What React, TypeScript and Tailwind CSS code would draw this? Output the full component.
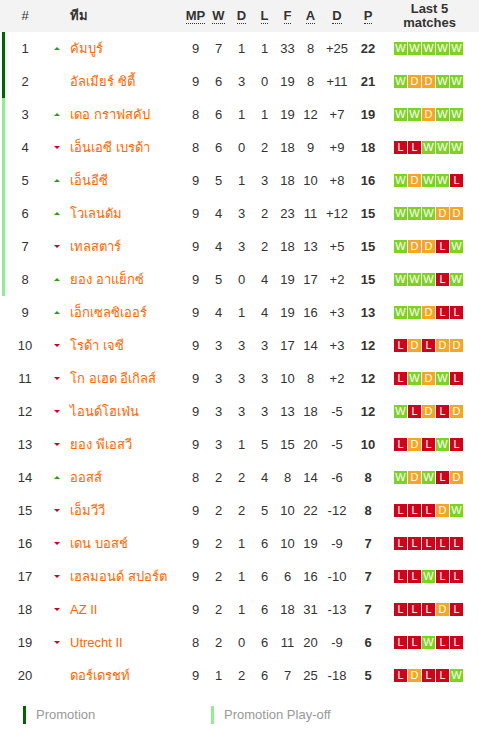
type Res = "W" | "D" | "L";

type Row = {
  pos: number;
  move: "up" | "down" | "";
  team: string;
  mp: number;
  w: number;
  d: number;
  l: number;
  f: number;
  a: number;
  diff: string;
  pts: number;
  form: string;
  zone: "promo" | "playoff" | "";
};

const rows: Row[] = [
  { pos: 1, move: "up", team: "คัมบูร์", mp: 9, w: 7, d: 1, l: 1, f: 33, a: 8, diff: "+25", pts: 22, form: "WWWWW", zone: "promo" },
  { pos: 2, move: "", team: "อัลเมียร์ ซิตี้", mp: 9, w: 6, d: 3, l: 0, f: 19, a: 8, diff: "+11", pts: 21, form: "WDDWW", zone: "promo" },
  { pos: 3, move: "up", team: "เดอ กราฟสคัป", mp: 8, w: 6, d: 1, l: 1, f: 19, a: 12, diff: "+7", pts: 19, form: "WWDWW", zone: "playoff" },
  { pos: 4, move: "down", team: "เอ็นเอซี เบรด้า", mp: 8, w: 6, d: 0, l: 2, f: 18, a: 9, diff: "+9", pts: 18, form: "LLWWW", zone: "playoff" },
  { pos: 5, move: "up", team: "เอ็นอีซี", mp: 9, w: 5, d: 1, l: 3, f: 18, a: 10, diff: "+8", pts: 16, form: "WDWWL", zone: "playoff" },
  { pos: 6, move: "up", team: "โวเลนดัม", mp: 9, w: 4, d: 3, l: 2, f: 23, a: 11, diff: "+12", pts: 15, form: "WWWDD", zone: "playoff" },
  { pos: 7, move: "down", team: "เทลสตาร์", mp: 9, w: 4, d: 3, l: 2, f: 18, a: 13, diff: "+5", pts: 15, form: "WDDLW", zone: "playoff" },
  { pos: 8, move: "up", team: "ยอง อาแย็กซ์", mp: 9, w: 5, d: 0, l: 4, f: 19, a: 17, diff: "+2", pts: 15, form: "WWWLW", zone: "playoff" },
  { pos: 9, move: "up", team: "เอ็กเซลซิเออร์", mp: 9, w: 4, d: 1, l: 4, f: 19, a: 16, diff: "+3", pts: 13, form: "WWDLL", zone: "" },
  { pos: 10, move: "down", team: "โรด้า เจซี", mp: 9, w: 3, d: 3, l: 3, f: 17, a: 14, diff: "+3", pts: 12, form: "LDLDD", zone: "" },
  { pos: 11, move: "down", team: "โก อเฮด อีเกิลส์", mp: 9, w: 3, d: 3, l: 3, f: 10, a: 8, diff: "+2", pts: 12, form: "LWDWL", zone: "" },
  { pos: 12, move: "down", team: "ไอนด์โฮเฟ่น", mp: 9, w: 3, d: 3, l: 3, f: 13, a: 18, diff: "-5", pts: 12, form: "WLDLD", zone: "" },
  { pos: 13, move: "down", team: "ยอง พีเอสวี", mp: 9, w: 3, d: 1, l: 5, f: 15, a: 20, diff: "-5", pts: 10, form: "LDLWL", zone: "" },
  { pos: 14, move: "up", team: "ออสส์", mp: 8, w: 2, d: 2, l: 4, f: 8, a: 14, diff: "-6", pts: 8, form: "WDWLD", zone: "" },
  { pos: 15, move: "down", team: "เอ็มวีวี", mp: 9, w: 2, d: 2, l: 5, f: 10, a: 22, diff: "-12", pts: 8, form: "LLLDW", zone: "" },
  { pos: 16, move: "down", team: "เดน บอสช์", mp: 9, w: 2, d: 1, l: 6, f: 10, a: 19, diff: "-9", pts: 7, form: "LLLLL", zone: "" },
  { pos: 17, move: "down", team: "เฮลมอนด์ สปอร์ต", mp: 9, w: 2, d: 1, l: 6, f: 6, a: 16, diff: "-10", pts: 7, form: "LLWLL", zone: "" },
  { pos: 18, move: "down", team: "AZ II", mp: 9, w: 2, d: 1, l: 6, f: 18, a: 31, diff: "-13", pts: 7, form: "LLLDL", zone: "" },
  { pos: 19, move: "down", team: "Utrecht II", mp: 8, w: 2, d: 0, l: 6, f: 11, a: 20, diff: "-9", pts: 6, form: "LLWLL", zone: "" },
  { pos: 20, move: "", team: "ดอร์เดรชท์", mp: 9, w: 1, d: 2, l: 6, f: 7, a: 25, diff: "-18", pts: 5, form: "LDLLW", zone: "" },
];

const resColor: Record<Res, string> = {
  W: "bg-[#7ed321]",
  D: "bg-[#f5a623]",
  L: "bg-[#d0021b]",
};

function Abbr({ children }: { children: string }) {
  return (
    <span className="border-b border-dotted border-[#333] leading-[13px]">
      {children}
    </span>
  );
}

function Arrow({ move }: { move: Row["move"] }) {
  if (move === "up") {
    return (
      <span className="block w-0 h-0 border-l-[3px] border-r-[3px] border-b-[3px] border-l-transparent border-r-transparent border-b-[#2f9a1a]" />
    );
  }
  if (move === "down") {
    return (
      <span className="block w-0 h-0 border-l-[3px] border-r-[3px] border-t-[3px] border-l-transparent border-r-transparent border-t-[#d0021b]" />
    );
  }
  return null;
}

export default function App() {
  return (
    <div className="w-[479px] bg-white text-[13px] text-[#333] font-['Liberation_Sans','Noto_Sans',sans-serif]">
      <div className="flex items-center h-[32px] bg-[#f3f3f3] font-bold">
        <div className="w-[50px] text-center font-normal">#</div>
        <div className="w-[14px]" />
        <div className="w-[120px] pl-[6px]">ทีม</div>
        <div className="w-[23px] text-center"><Abbr>MP</Abbr></div>
        <div className="w-[23px] text-center"><Abbr>W</Abbr></div>
        <div className="w-[23px] text-center"><Abbr>D</Abbr></div>
        <div className="w-[23px] text-center"><Abbr>L</Abbr></div>
        <div className="w-[23px] text-center"><Abbr>F</Abbr></div>
        <div className="w-[23px] text-center"><Abbr>A</Abbr></div>
        <div className="w-[30px] text-center"><Abbr>D</Abbr></div>
        <div className="w-[32px] text-center"><Abbr>P</Abbr></div>
        <div className="flex-1 text-center leading-[14px] pr-[4px]">
          Last 5
          <br />
          matches
        </div>
      </div>

      {rows.map((r) => (
        <div key={r.pos} className="flex items-center h-[33px] relative">
          {r.zone !== "" && (
            <span
              className={`absolute left-[2px] top-0 bottom-0 w-[3px] ${
                r.zone === "promo" ? "bg-[#006400]" : "bg-[#90ee90]"
              }`}
            />
          )}
          <div className="w-[50px] text-center">{r.pos}</div>
          <div className="w-[14px] flex justify-center">
            <Arrow move={r.move} />
          </div>
          <div className="w-[120px] pl-[6px] text-[#ff6600] whitespace-nowrap">{r.team}</div>
          <div className="w-[23px] text-center">{r.mp}</div>
          <div className="w-[23px] text-center">{r.w}</div>
          <div className="w-[23px] text-center">{r.d}</div>
          <div className="w-[23px] text-center">{r.l}</div>
          <div className="w-[23px] text-center">{r.f}</div>
          <div className="w-[23px] text-center">{r.a}</div>
          <div className="w-[30px] text-center">{r.diff}</div>
          <div className="w-[32px] text-center font-bold">{r.pts}</div>
          <div className="flex gap-[1px] pl-[10px]">
            {r.form.split("").map((c, i) => (
              <span
                key={i}
                className={`w-[13px] h-[13px] flex items-center justify-center text-white text-[11px] leading-none ${resColor[c as Res]}`}
              >
                {c}
              </span>
            ))}
          </div>
        </div>
      ))}

      <div className="flex items-center h-[46px] text-[#999]">
        <div className="flex items-center w-[211px] pl-[23px]">
          <span className="w-[3px] h-[18px] bg-[#006400] mr-[10px]" />
          Promotion
        </div>
        <div className="flex items-center">
          <span className="w-[3px] h-[18px] bg-[#90ee90] mr-[10px]" />
          Promotion Play-off
        </div>
      </div>
    </div>
  );
}
